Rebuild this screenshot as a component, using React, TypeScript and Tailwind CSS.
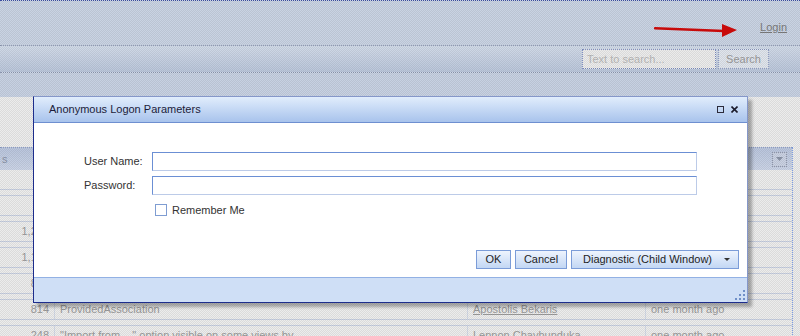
import React from 'react';

type Row = { n: string; name: string; author: string; when: string };

// rows 0-4 sit behind the dialog; only their numbers peek out on the left
const rows: Row[] = [
  { n: '', name: '', author: '', when: '' },
  { n: '', name: '', author: '', when: '' },
  { n: '1,284', name: '', author: '', when: '' },
  { n: '1,127', name: '', author: '', when: '' },
  { n: '862', name: '', author: '', when: '' },
  { n: '814', name: 'ProvidedAssociation', author: 'Apostolis Bekaris', when: 'one month ago' },
  { n: '248', name: '"Import from ..." option visible on some views by', author: 'Lennon Chavhunduka', when: 'one month ago' },
];

const Cells: React.FC<{ r: Row }> = ({ r }) => (
  <div className="flex h-[19px] items-center text-[11px] text-[#9a9a9a]">
    <div className="flex h-full w-[55px] items-center justify-end border-r border-[#d3d9e6] pr-[5px]">{r.n}</div>
    <div className="flex h-full w-[413px] items-center truncate border-r border-[#d3d9e6] pl-[5px]">{r.name}</div>
    <div className="flex h-full w-[178px] items-center border-r border-[#d3d9e6] pl-[5px] underline">{r.author}</div>
    <div className="flex h-full flex-1 items-center pl-[5px]">{r.when}</div>
  </div>
);

const Btn: React.FC<{ w: string; children: React.ReactNode }> = ({ w, children }) => (
  <div className={`flex h-[19px] items-center justify-center border border-[#7b9cd8] bg-linear-to-b from-[#eef4fd] to-[#c3d7f4] text-[11px] text-[#1e1e1e] ${w}`}>
    {children}
  </div>
);

export default function App() {
  return (
    <div className="relative h-[336px] w-[800px] overflow-hidden font-['Liberation_Sans',Arial,sans-serif] text-[11px]">
      {/* page behind the modal */}
      <div className="flex h-full flex-col">
        <div className="flex h-[46px] shrink-0 items-start justify-end border-y border-dotted border-t-[#3d4fa6] border-b-[#8f99b2] bg-[#c9d3e3] pr-[13px] pt-[18px]">
          <span className="text-[11px] text-[#7b7b7b] underline">Login</span>
        </div>
        <div className="flex h-[27px] shrink-0 items-center justify-end gap-[2px] border-b border-dotted border-[#8f99b2] bg-linear-to-b from-[#d1dae8] to-[#bac6db] pr-[31px]">
          <div className="flex h-[20px] w-[134px] items-center border border-dotted border-[#7f8fc2] bg-[#ebebeb] pl-[4px] text-[11px] text-[#b8b8b8]">
            Text to search...
          </div>
          <div className="flex h-[20px] w-[51px] items-center justify-center border border-dotted border-[#8c9ac2] bg-[#dfe4ec] text-[11px] text-[#9a9a9a]">
            Search
          </div>
        </div>
        <div className="h-[24px] shrink-0 bg-[#c7d1e2]" />
        <div className="min-h-0 flex-1 overflow-hidden bg-[#ececec] pt-[50px]">
          <div className="w-[793px] border-r border-dotted border-[#7d9de2]">
            <div className="flex h-[23px] items-center justify-between border-t border-dotted border-[#8a9bc2] bg-linear-to-b from-[#b9c5dd] to-[#cbd4e6] pl-[2px] pr-[5px] text-[11px] text-[#8a93a6]">
              <span>s</span>
              <div className="flex h-[15px] w-[15px] items-center justify-center border border-dotted border-[#8b93a8] bg-[#c9d1e2]">
                <svg width="7" height="4" viewBox="0 0 7 4">
                  <path d="M0 0h7L3.5 4z" fill="#8a93a6" />
                </svg>
              </div>
            </div>
            {rows.map((r, i) => (
              <div key={i}>
                {i > 0 && <div className="h-[7px] border-y border-[#c7cfe0]" />}
                <Cells r={r} />
              </div>
            ))}
          </div>
        </div>
      </div>

      {/* modal checker overlay */}
      <div className="absolute inset-0 z-[5] bg-[conic-gradient(rgba(0,0,0,0.07)_25%,transparent_0_50%,rgba(0,0,0,0.07)_0_75%,transparent_0)] bg-[length:2px_2px]" />

      {/* annotation arrow */}
      <svg className="absolute left-[654px] top-[22px] z-20" width="86" height="17" viewBox="0 0 86 17">
        <path d="M1 6.2L70 9" stroke="#c80a0a" strokeWidth="2.4" strokeLinecap="round" />
        <path d="M68 2L83 8L68 15z" fill="#c80a0a" />
      </svg>

      {/* dialog */}
      <div className="absolute left-[33px] top-[96px] z-10 flex h-[207px] w-[715px] flex-col border border-b-[#1d2d8c] border-l-[#1d2d8c] border-r-[#8597c9] border-t-[#8597c9] bg-white shadow-[4px_4px_3px_rgba(0,0,0,0.3)]">
        <div className="flex h-[26px] shrink-0 items-center justify-between border-b border-[#6e8fd0] bg-linear-to-b from-[#e1edfc] to-[#a8c3ec] pl-[15px] pr-[9px] text-[11px] text-[#1c1c3a]">
          <span>Anonymous Logon Parameters</span>
          <div className="flex items-center gap-[7px]">
            <svg width="7" height="7" viewBox="0 0 7 7">
              <rect x="0.5" y="0.5" width="6" height="6" fill="none" stroke="#2b2b3b" />
            </svg>
            <svg width="7" height="7" viewBox="0 0 7 7">
              <path d="M0.5 0.5L6.5 6.5M6.5 0.5L0.5 6.5" stroke="#1b1b2b" strokeWidth="1.6" />
            </svg>
          </div>
        </div>

        <div className="flex flex-1 flex-col pb-[8px] pr-[8px] pt-[29px] text-[11px] text-[#333]">
          <div className="flex items-center pl-[50px] pr-[42px]">
            <span className="w-[68px]">User Name:</span>
            <div className="h-[19px] flex-1 border border-b-[#bccbe8] border-l-[#6b8fd4] border-r-[#bccbe8] border-t-[#6b8fd4]" />
          </div>
          <div className="mt-[5px] flex items-center pl-[50px] pr-[42px]">
            <span className="w-[68px]">Password:</span>
            <div className="h-[19px] flex-1 border border-b-[#bccbe8] border-l-[#6b8fd4] border-r-[#bccbe8] border-t-[#6b8fd4]" />
          </div>
          <div className="mt-[7px] flex items-center pl-[121px]">
            <div className="h-[12px] w-[12px] border border-[#7f9dd2] bg-white" />
            <span className="ml-[5px]">Remember Me</span>
          </div>
          <div className="mt-auto flex justify-end gap-[4px]">
            <Btn w="w-[35px]">OK</Btn>
            <Btn w="w-[52px]">Cancel</Btn>
            <div className="flex h-[19px] w-[168px] items-center justify-between border border-[#7b9cd8] bg-linear-to-b from-[#eef4fd] to-[#c3d7f4] pl-[11px] pr-[8px] text-[11px] text-[#1e1e1e]">
              <span>Diagnostic (Child Window)</span>
              <svg width="6" height="3" viewBox="0 0 6 3">
                <path d="M0 0h6L3 3z" fill="#333" />
              </svg>
            </div>
          </div>
        </div>

        <div className="relative h-[25px] shrink-0 border-t border-[#92b1e4] bg-[#cfdff6]">
          <svg className="absolute bottom-[2px] right-[2px]" width="10" height="10" viewBox="0 0 10 10">
            <rect x="8" y="0" width="2" height="2" fill="#6f8fc8" />
            <rect x="4" y="4" width="2" height="2" fill="#6f8fc8" />
            <rect x="8" y="4" width="2" height="2" fill="#6f8fc8" />
            <rect x="0" y="8" width="2" height="2" fill="#6f8fc8" />
            <rect x="4" y="8" width="2" height="2" fill="#6f8fc8" />
            <rect x="8" y="8" width="2" height="2" fill="#6f8fc8" />
          </svg>
        </div>
      </div>
    </div>
  );
}
